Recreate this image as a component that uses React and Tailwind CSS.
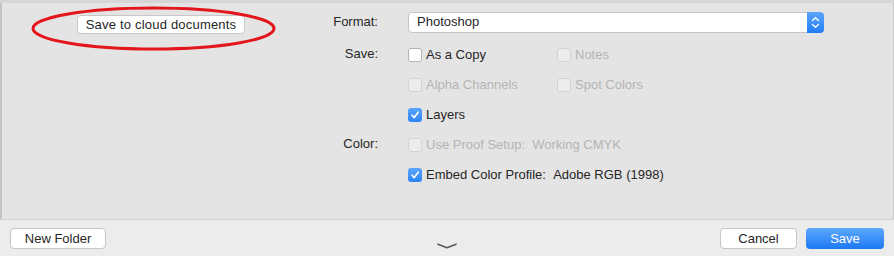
import React from 'react';

function Checkbox({ checked, disabled }) {
  if (checked) {
    return (
      <span className="w-[14px] h-[14px] rounded-[3px] bg-gradient-to-b from-[#5aa5fa] to-[#2c84f6] flex items-center justify-center shrink-0">
        <svg width="10" height="10" viewBox="0 0 10 10">
          <path d="M2 5.2 L4.2 7.6 L8.2 2.2" fill="none" stroke="#fff" strokeWidth="1.6" strokeLinecap="round" strokeLinejoin="round" />
        </svg>
      </span>
    );
  }
  return (
    <span
      className={
        disabled
          ? 'w-[14px] h-[14px] rounded-[3px] border border-[#d3d3d3] bg-[#ececec] shrink-0'
          : 'w-[14px] h-[14px] rounded-[3px] border border-[#b3b3b3] bg-white shrink-0'
      }
    />
  );
}

function Option({ label, checked, disabled, className = '' }) {
  return (
    <div className={'flex items-center gap-[4px] ' + className}>
      <Checkbox checked={checked} disabled={disabled} />
      <span className={disabled ? 'text-[#b4b4b4]' : 'text-[#262626]'}>{label}</span>
    </div>
  );
}

export default function App() {
  return (
    <div
      className="w-[894px] h-[256px] bg-[#e4e4e4] flex flex-col text-[13px] text-[#262626] relative overflow-hidden"
      style={{ fontFamily: '"Liberation Sans", Arial, sans-serif' }}
    >
      <div className="h-[3px] bg-[#d6d6d6] shrink-0" />
      <div className="flex-1 flex border-l-2 border-[#c4c4c4] border-r border-r-[#c9c9c9]">
        <div className="flex-1 pt-[9px]">
          <div className="flex items-center h-[20px]">
            <div className="w-[376px] flex items-center">
              <button className="ml-[75px] mt-[4px] h-[19px] w-[168px] bg-white border border-[#c8c8c8] rounded-[4px] leading-none text-[13px] tracking-[0.2px]">
                Save to cloud documents
              </button>
              <span className="ml-auto">Format:</span>
            </div>
            <div className="ml-[30px] w-[416px] h-[21px] bg-white border border-[#c4c4c4] rounded-[4px] flex items-center relative">
              <span className="pl-[8px]">Photoshop</span>
              <span className="absolute right-[-1px] top-[-1px] w-[17px] h-[21px] rounded-r-[4px] bg-gradient-to-b from-[#5ba6fb] to-[#1f7ef5] flex items-center justify-center">
                <svg width="9" height="13" viewBox="0 0 9 13">
                  <path d="M1.5 4.5 L4.5 1.8 L7.5 4.5 M1.5 8.5 L4.5 11.2 L7.5 8.5" fill="none" stroke="#fff" strokeWidth="1.3" strokeLinecap="round" strokeLinejoin="round" />
                </svg>
              </span>
            </div>
          </div>

          <div className="mt-[8px] flex">
            <div className="w-[376px] text-right pt-[4px]">Save:</div>
            <div className="ml-[30px] flex flex-col">
              <div className="h-[30px] flex items-center">
                <Option label="As a Copy" className="w-[149px]" />
                <Option label="Notes" disabled />
              </div>
              <div className="h-[30px] flex items-center">
                <Option label="Alpha Channels" disabled className="w-[149px]" />
                <Option label="Spot Colors" disabled />
              </div>
              <div className="h-[30px] flex items-center">
                <Option label="Layers" checked />
              </div>
            </div>
          </div>

          <div className="flex">
            <div className="w-[376px] text-right pt-[4px]">Color:</div>
            <div className="ml-[30px] flex flex-col">
              <div className="h-[30px] flex items-center">
                <Option label={'Use Proof Setup:\u00a0\u00a0Working CMYK'} disabled />
              </div>
              <div className="h-[30px] flex items-center">
                <Option label={'Embed Color Profile:\u00a0\u00a0Adobe RGB (1998)'} checked />
              </div>
            </div>
          </div>
        </div>
      </div>

      <div className="h-[37px] shrink-0 bg-[#ececec] border-t border-[#d2d2d2] flex items-center px-[10px] relative">
        <button className="h-[21px] w-[96px] bg-white border border-[#c6c6c6] rounded-[4px] leading-none text-[13px]">
          New Folder
        </button>
        <svg className="absolute left-[437px] top-[23px]" width="20" height="6" viewBox="0 0 20 6">
          <path d="M1 1.2 L10 4.8 L19 1.2" fill="none" stroke="#5a5a5a" strokeWidth="1.6" strokeLinecap="round" strokeLinejoin="round" />
        </svg>
        <button className="ml-auto h-[21px] w-[77px] bg-white border border-[#c6c6c6] rounded-[4px] leading-none text-[13px]">
          Cancel
        </button>
        <button className="ml-[9px] h-[21px] w-[78px] bg-gradient-to-b from-[#5aa7fb] to-[#1a78f4] text-white rounded-[4px] leading-none text-[13px]">
          Save
        </button>
      </div>

      <svg className="absolute left-0 top-0 pointer-events-none" width="894" height="256">
        <ellipse cx="153.5" cy="28.5" rx="120.5" ry="20.5" fill="none" stroke="#e3161c" strokeWidth="3" />
      </svg>
    </div>
  );
}
